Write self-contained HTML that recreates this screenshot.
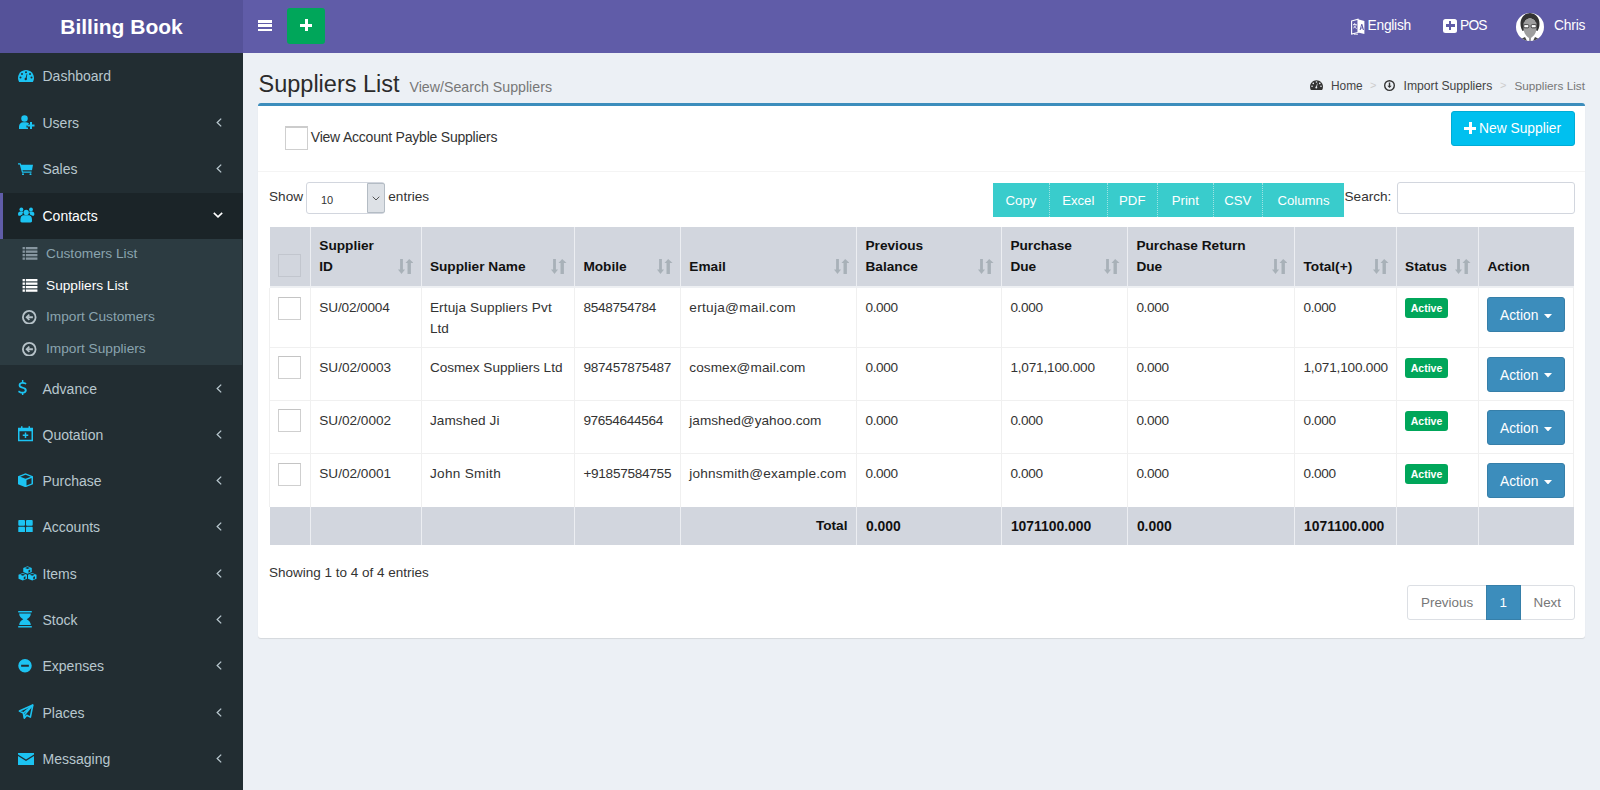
<!DOCTYPE html>
<html><head><meta charset="utf-8">
<style>
*{box-sizing:border-box;margin:0;padding:0}
html,body{width:1600px;height:790px;overflow:hidden}
body{font-family:"Liberation Sans",sans-serif;background:#ecf0f5;color:#333;font-size:13.6px;position:relative}
.abs{position:absolute}
#logo{left:0;top:0;width:243px;height:53px;background:#555299;color:#fff;font-weight:bold;font-size:21px;text-align:center;line-height:53px}
#nav{left:243px;top:0;width:1357px;height:53px;background:#605ca8}
#side{left:0;top:53px;width:243px;height:737px;background:#222d32}
.mt{font-size:14px;line-height:20px;white-space:nowrap}
.st{font-size:13.7px;line-height:20px;white-space:nowrap}
.nt{color:#fff;font-size:13.4px;line-height:20px;white-space:nowrap}
.box{left:258px;top:103px;width:1327px;height:535px;background:#fff;border-top:3px solid #3c8dbc;border-radius:3px;box-shadow:0 1px 1px rgba(0,0,0,.1)}
.t{white-space:nowrap;line-height:20px}
.th{font-weight:bold;color:#111;font-size:13.67px;line-height:20px;white-space:nowrap}
.td{font-size:13.6px;line-height:20px;white-space:nowrap;color:#333}
.cb{width:23px;height:23px;border:1px solid #cfcfcf;border-top-color:#c4c4c4;border-radius:0;background:#fff}
.lbl{width:43px;height:20px;background:#00a65a;color:#fff;font-weight:bold;font-size:10.5px;line-height:20px;text-align:center;border-radius:3px}
.act{width:78px;height:35px;background:#3c8dbc;color:#fff;font-size:13.8px;line-height:35px;border-radius:3px;border:1px solid #367fa9;padding-left:12px}
.dt{top:183px;height:34px;background:#39cccc;color:#fff;font-size:13.2px;line-height:35px;text-align:center;border-right:1px dotted #9fe3e3}
</style></head>
<body>
<div id="logo" class="abs">Billing Book</div>
<div id="nav" class="abs"></div>
<!-- hamburger -->
<div class="abs" style="left:258px;top:20px;width:14px;height:2.5px;background:#fff"></div>
<div class="abs" style="left:258px;top:24.3px;width:14px;height:2.5px;background:#fff"></div>
<div class="abs" style="left:258px;top:28.6px;width:14px;height:2.5px;background:#fff"></div>
<!-- green plus -->
<div class="abs" style="left:287px;top:8px;width:38px;height:36px;background:#00a65a;border-radius:3px"></div>
<div class="abs" style="left:300px;top:23.5px;width:12px;height:3px;background:#fff"></div>
<div class="abs" style="left:304.5px;top:19px;width:3px;height:12px;background:#fff"></div>
<!-- right nav -->
<svg class="abs" style="left:1351px;top:17.5px;width:14px;height:17px" viewBox="0 0 14 17"><path d="M0.6 3L7 1.2V14.5L0.6 16z" fill="none" stroke="#fff" stroke-width="1.1"/><path d="M7 1.2L13.4 3V16L7 14.5z" fill="#fff"/><path d="M2 6.5h3.5M3.7 5v1.5M2.3 10c1.5-.5 2.8-2 3-3.5M3 7.5c.5 1.5 1.5 2.5 2.8 3" fill="none" stroke="#fff" stroke-width=".8"/><path d="M8.6 12l1.7-6h1l1.7 6h-1.1l-.4-1.5h-1.4L9.7 12zm1.4-2.4h1l-.5-1.9z" fill="#605ca8"/><path d="M3 16.5c1 .5 3 .5 4-.5" fill="none" stroke="#fff" stroke-width=".8"/></svg>
<div class="abs nt" style="left:1367.5px;top:16px;font-size:13.8px;letter-spacing:-0.25px">English</div>
<div class="abs" style="left:1443px;top:18.5px;width:14px;height:14px;background:#fff;border-radius:2.5px"></div>
<div class="abs" style="left:1445.5px;top:24.3px;width:9px;height:2.4px;background:#605ca8"></div>
<div class="abs" style="left:1448.8px;top:21px;width:2.4px;height:9px;background:#605ca8"></div>
<div class="abs nt" style="left:1460px;top:16px;font-size:13.8px;letter-spacing:-0.8px">POS</div>
<svg class="abs" style="left:1516px;top:13px;width:28px;height:28px" viewBox="0 0 28 28"><defs><clipPath id="cc"><circle cx="14" cy="14" r="14"/></clipPath></defs><circle cx="14" cy="14" r="14" fill="#fff"/><g clip-path="url(#cc)"><path d="M4.5 11C4.5 4 9 0 14 0s9.5 4 9.5 11c0 3-1 5-2 7l-2.5-1V8c-2-2-4-2.5-5-2.5S11 6 9 8v9l-2.5 1C5.5 16 4.5 14 4.5 11z" fill="#333"/><path d="M9 8c1.5-2 3.5-2.5 5-2.5s3.5.5 5 2.5l1.5 2v5c0 4-2 8-6.5 10.5C9.5 23 7.5 19 7.5 15v-5z" fill="#9e9e9e"/><path d="M13 24h2v4h-2z" fill="#9e9e9e"/><path d="M5 26l4-2 2 4H5zM23 26l-4-2-2 4h6z" fill="#444"/><rect x="7.8" y="11.6" width="5" height="3.2" rx="1" fill="#fff" stroke="#222" stroke-width=".8"/><rect x="15.2" y="11.6" width="5" height="3.2" rx="1" fill="#fff" stroke="#222" stroke-width=".8"/></g></svg>
<div class="abs nt" style="left:1554px;top:16px;font-size:13.8px;letter-spacing:-0.2px">Chris</div>

<div id="side" class="abs"></div>
<div class="abs" style="left:0;top:193px;width:243px;height:46px;background:#1b2428;border-left:3px solid #605ca8"></div>
<div class="abs" style="left:0;top:239px;width:242px;height:126px;background:#2c3b41"></div>
<svg class="abs" style="left:18px;top:70px;width:16px;height:12px" viewBox="0 0 32 24" fill="#1cc3f2"><path d="M16 0C7.2 0 0 7.2 0 16c0 2.9.8 5.6 2.2 8h27.6c1.4-2.4 2.2-5.1 2.2-8C32 7.2 24.8 0 16 0z" /><g fill="#222d32"><circle cx="16" cy="4.5" r="2"/><circle cx="8" cy="8" r="2"/><circle cx="24" cy="8" r="2"/><circle cx="5" cy="15" r="2"/><circle cx="27" cy="15" r="2"/><circle cx="15.5" cy="18" r="2.4"/><path d="M14.8 17.5l2.6-9.5 1.2.3-1.6 9.6z"/></g></svg>
<div class="abs mt" style="left:42.5px;top:66.0px;color:#b8c7ce">Dashboard</div>
<svg class="abs" style="left:18px;top:115px;width:18px;height:14px" viewBox="0 0 36 28" fill="#1cc3f2"><circle cx="13" cy="7" r="6.5"/><path d="M2 28v-5c0-5 4-8.5 8-8.5h6c3 0 5 1.5 6.5 3.5H20v3h-3v4h3v3z"/><path d="M24 14h4v5h5v4h-5v5h-4v-5h-5v-4h5z"/></svg>
<div class="abs mt" style="left:42.5px;top:112.5px;color:#b8c7ce">Users</div>
<svg class="abs" style="left:216px;top:117.5px;width:6px;height:9px" viewBox="0 0 6 9"><path d="M5.2 .6L1.2 4.5l4 3.9" fill="none" stroke="#b8c7ce" stroke-width="1.3"/></svg>
<svg class="abs" style="left:18px;top:162.5px;width:15px;height:12.5px" viewBox="0 0 30 24" fill="#1cc3f2"><path d="M0 0h5l1.5 3H30l-2 11H9l.8 2.5H27V19H8L3.5 2.5H0z"/><circle cx="10" cy="22" r="2"/><circle cx="25" cy="22" r="2"/></svg>
<div class="abs mt" style="left:42.5px;top:159.0px;color:#b8c7ce">Sales</div>
<svg class="abs" style="left:216px;top:164.0px;width:6px;height:9px" viewBox="0 0 6 9"><path d="M5.2 .6L1.2 4.5l4 3.9" fill="none" stroke="#b8c7ce" stroke-width="1.3"/></svg>
<svg class="abs" style="left:18.4px;top:207px;width:16.4px;height:15.6px" viewBox="0 0 34 32" fill="#1cc3f2"><circle cx="7" cy="5" r="4"/><circle cx="27" cy="5" r="4"/><path d="M0 15c0-4 2-6 5-6h4c1 0 1.5.5 2 1-1 1.5-2 3.5-2 6-1 0-3 1-4 2H1z"/><path d="M34 15c0-4-2-6-5-6h-4c-1 0-1.5.5-2 1 1 1.5 2 3.5 2 6 1 0 3 1 4 2h4z"/><circle cx="17" cy="11" r="5.5"/><path d="M5 26c0-6 3-9 7-9h10c4 0 7 3 7 9v3c0 2-1 3-3 3H8c-2 0-3-1-3-3z"/></svg>
<div class="abs mt" style="left:42.5px;top:205.5px;color:#fff">Contacts</div>
<svg class="abs" style="left:213px;top:212.0px;width:10px;height:6px" viewBox="0 0 10 6"><path d="M.8 .8l4.2 4 4.2-4" fill="none" stroke="#fff" stroke-width="1.6"/></svg>
<svg class="abs" style="left:18.2px;top:379.5px;width:8.8px;height:15.5px" viewBox="0 0 18 32" fill="#1cc3f2"><path d="M8 0h3v4c2.5.3 5 1.3 6.5 2.5L16 9.5c-1.8-1.2-4-2-6.5-2-2.8 0-4.5 1.2-4.5 3 0 2 2 2.8 5.5 3.7 4.2 1.1 7.5 2.7 7.5 7 0 3.7-2.7 6.2-7 6.8V32H8v-4c-3-.3-6-1.6-8-3.3l1.8-3c2 1.6 4.5 2.6 7.3 2.6 3 0 4.8-1.2 4.8-3.2 0-2-1.8-2.8-5.3-3.8C4.5 16.2 1.3 14.6 1.3 10.6c0-3.4 2.6-6 6.7-6.6z"/></svg>
<div class="abs mt" style="left:42.5px;top:378.5px;color:#b8c7ce">Advance</div>
<svg class="abs" style="left:216px;top:383.5px;width:6px;height:9px" viewBox="0 0 6 9"><path d="M5.2 .6L1.2 4.5l4 3.9" fill="none" stroke="#b8c7ce" stroke-width="1.3"/></svg>
<svg class="abs" style="left:18px;top:426px;width:15px;height:15.6px" viewBox="0 0 30 30" fill="#1cc3f2"><path fill-rule="evenodd" d="M6 0h3v3h12V0h3v3h6v27H0V3h6zM3 10v17h24V10z"/><path d="M13.5 12.5h3v4h4v3h-4v4h-3v-4h-4v-3h4z"/></svg>
<div class="abs mt" style="left:42.5px;top:424.5px;color:#b8c7ce">Quotation</div>
<svg class="abs" style="left:216px;top:429.5px;width:6px;height:9px" viewBox="0 0 6 9"><path d="M5.2 .6L1.2 4.5l4 3.9" fill="none" stroke="#b8c7ce" stroke-width="1.3"/></svg>
<svg class="abs" style="left:18px;top:472.8px;width:15px;height:14.5px" viewBox="0 0 30 28" fill="#1cc3f2"><path d="M15 0L30 6V22L15 28L0 22V6z"/><g fill="#222d32"><path d="M15 3L25.5 7L15 11L4.5 7z"/><path d="M17 13.5L27 9.5V20.5L17 24.5z"/></g></svg>
<div class="abs mt" style="left:42.5px;top:470.5px;color:#b8c7ce">Purchase</div>
<svg class="abs" style="left:216px;top:475.5px;width:6px;height:9px" viewBox="0 0 6 9"><path d="M5.2 .6L1.2 4.5l4 3.9" fill="none" stroke="#b8c7ce" stroke-width="1.3"/></svg>
<svg class="abs" style="left:18px;top:519.5px;width:15px;height:12.5px" viewBox="0 0 30 26" fill="#1cc3f2"><rect x="0" y="0" width="14" height="12" rx="2"/><rect x="16" y="0" width="14" height="12" rx="2"/><rect x="0" y="14" width="14" height="12" rx="2"/><rect x="16" y="14" width="14" height="12" rx="2"/></svg>
<div class="abs mt" style="left:42.5px;top:517.0px;color:#b8c7ce">Accounts</div>
<svg class="abs" style="left:216px;top:522.0px;width:6px;height:9px" viewBox="0 0 6 9"><path d="M5.2 .6L1.2 4.5l4 3.9" fill="none" stroke="#b8c7ce" stroke-width="1.3"/></svg>
<svg class="abs" style="left:18px;top:565.5px;width:19px;height:15.2px" viewBox="0 0 38 30" fill="#1cc3f2"><path d="M10.5 4L19 0.5L27.5 4V12L19 15.5L10.5 12z"/><path d="M1.0 17.5L9.5 14.0L18.0 17.5V25.5L9.5 29.0L1.0 25.5z"/><path d="M20.0 17.5L28.5 14.0L37.0 17.5V25.5L28.5 29.0L20.0 25.5z"/><g fill="#222d32"><path d="M14 4L19 2L24 4L19 6z"/><path d="M21 8.5L24.5 6.7V11.5L21 13.3z"/><path d="M4.5 17.5L9.5 15.5L14.5 17.5L9.5 19.5z"/><path d="M11.5 22.0L15.0 20.2V25.0L11.5 26.8z"/><path d="M23.5 17.5L28.5 15.5L33.5 17.5L28.5 19.5z"/><path d="M30.5 22.0L34.0 20.2V25.0L30.5 26.8z"/></g></svg>
<div class="abs mt" style="left:42.5px;top:563.5px;color:#b8c7ce">Items</div>
<svg class="abs" style="left:216px;top:568.5px;width:6px;height:9px" viewBox="0 0 6 9"><path d="M5.2 .6L1.2 4.5l4 3.9" fill="none" stroke="#b8c7ce" stroke-width="1.3"/></svg>
<svg class="abs" style="left:18px;top:611px;width:14px;height:16.5px" viewBox="0 0 28 34" fill="#1cc3f2"><rect x="0" y="0" width="28" height="3"/><rect x="0" y="31" width="28" height="3"/><path d="M2 5h24c0 6-4 9-8.5 12C22 20 26 23 26 29H2c0-6 4-9 8.5-12C6 14 2 11 2 5z"/></svg>
<div class="abs mt" style="left:42.5px;top:609.5px;color:#b8c7ce">Stock</div>
<svg class="abs" style="left:216px;top:614.5px;width:6px;height:9px" viewBox="0 0 6 9"><path d="M5.2 .6L1.2 4.5l4 3.9" fill="none" stroke="#b8c7ce" stroke-width="1.3"/></svg>
<svg class="abs" style="left:18px;top:659px;width:14px;height:13.5px" viewBox="0 0 28 28" fill="#1cc3f2"><path fill-rule="evenodd" d="M14 0a14 14 0 1 1 0 28A14 14 0 0 1 14 0zM6 12v4h16v-4z"/></svg>
<div class="abs mt" style="left:42.5px;top:656.0px;color:#b8c7ce">Expenses</div>
<svg class="abs" style="left:216px;top:661.0px;width:6px;height:9px" viewBox="0 0 6 9"><path d="M5.2 .6L1.2 4.5l4 3.9" fill="none" stroke="#b8c7ce" stroke-width="1.3"/></svg>
<svg class="abs" style="left:18px;top:704.2px;width:16px;height:15.6px" viewBox="0 0 32 32" fill="#1cc3f2"><g fill="none" stroke="#1cc3f2" stroke-width="3.2" stroke-linejoin="round"><path d="M30 2L2.5 14.5 10.5 18.5 12.5 29 17.5 23 25 27z"/><path d="M30 2L10.5 18.5M30 2L13 22l0 6"/></g></svg>
<div class="abs mt" style="left:42.5px;top:702.5px;color:#b8c7ce">Places</div>
<svg class="abs" style="left:216px;top:707.5px;width:6px;height:9px" viewBox="0 0 6 9"><path d="M5.2 .6L1.2 4.5l4 3.9" fill="none" stroke="#b8c7ce" stroke-width="1.3"/></svg>
<svg class="abs" style="left:18px;top:752.7px;width:16px;height:12.1px" viewBox="0 0 32 24" fill="#1cc3f2"><path d="M0 0h32v3L16 13 0 3z"/><path d="M0 6l16 10 16-10v18H0z"/></svg>
<div class="abs mt" style="left:42.5px;top:749.0px;color:#b8c7ce">Messaging</div>
<svg class="abs" style="left:216px;top:754.0px;width:6px;height:9px" viewBox="0 0 6 9"><path d="M5.2 .6L1.2 4.5l4 3.9" fill="none" stroke="#b8c7ce" stroke-width="1.3"/></svg>
<svg class="abs" style="left:22px;top:247.0px;width:16px;height:13px" viewBox="0 0 32 28" fill="#8796a0"><rect x="0" y="0" width="5" height="5"/><rect x="7" y="0" width="25" height="5"/><rect x="0" y="7.5" width="5" height="5"/><rect x="7" y="7.5" width="25" height="5"/><rect x="0" y="15" width="5" height="5"/><rect x="7" y="15" width="25" height="5"/><rect x="0" y="22.5" width="5" height="5"/><rect x="7" y="22.5" width="25" height="5"/></svg>
<div class="abs st" style="left:46px;top:243.5px;color:#8aa4af">Customers List</div>
<svg class="abs" style="left:22px;top:279.0px;width:16px;height:13px" viewBox="0 0 32 28" fill="#fff"><rect x="0" y="0" width="5" height="5"/><rect x="7" y="0" width="25" height="5"/><rect x="0" y="7.5" width="5" height="5"/><rect x="7" y="7.5" width="25" height="5"/><rect x="0" y="15" width="5" height="5"/><rect x="7" y="15" width="25" height="5"/><rect x="0" y="22.5" width="5" height="5"/><rect x="7" y="22.5" width="25" height="5"/></svg>
<div class="abs st" style="left:46px;top:275.5px;color:#fff">Suppliers List</div>
<svg class="abs" style="left:22px;top:309.5px;width:14.5px;height:14.5px" viewBox="0 0 28 28" fill="#b6c2c8"><path fill-rule="evenodd" d="M14 0a14 14 0 1 1 0 28A14 14 0 0 1 14 0zm0 3.5a10.5 10.5 0 1 0 0 21 10.5 10.5 0 0 0 0-21z"/><path d="M13 7.5l2.5 2.5-3 2.3H21v3.4h-8.5l3 2.3-2.5 2.5L6.5 14z"/></svg>
<div class="abs st" style="left:46px;top:307.0px;color:#8aa4af">Import Customers</div>
<svg class="abs" style="left:22px;top:341.5px;width:14.5px;height:14.5px" viewBox="0 0 28 28" fill="#b6c2c8"><path fill-rule="evenodd" d="M14 0a14 14 0 1 1 0 28A14 14 0 0 1 14 0zm0 3.5a10.5 10.5 0 1 0 0 21 10.5 10.5 0 0 0 0-21z"/><path d="M13 7.5l2.5 2.5-3 2.3H21v3.4h-8.5l3 2.3-2.5 2.5L6.5 14z"/></svg>
<div class="abs st" style="left:46px;top:339.0px;color:#8aa4af">Import Suppliers</div>

<!-- content header -->
<div class="abs t" style="left:258.5px;top:70px;font-size:23.5px;line-height:28px;color:#2b2b2b">Suppliers List</div>
<div class="abs t" style="left:409.5px;top:77px;font-size:14.2px;color:#777">View/Search Suppliers</div>
<!-- breadcrumb -->
<svg class="abs" style="left:1310px;top:80px;width:13px;height:10px" viewBox="0 0 32 24" fill="#333"><path d="M16 0C7.2 0 0 7.2 0 16c0 2.9.8 5.6 2.2 8h27.6c1.4-2.4 2.2-5.1 2.2-8C32 7.2 24.8 0 16 0z"/><g fill="#ecf0f5"><circle cx="16" cy="4.5" r="2"/><circle cx="8" cy="8" r="2"/><circle cx="24" cy="8" r="2"/><circle cx="5" cy="15" r="2"/><circle cx="27" cy="15" r="2"/><circle cx="15.5" cy="18" r="2.4"/><path d="M14.8 17.5l2.6-9.5 1.2.3-1.6 9.6z"/></g></svg>
<div class="abs t" style="left:1331px;top:75.5px;font-size:11.9px;color:#444">Home</div>
<div class="abs t" style="left:1370px;top:75px;font-size:11px;color:#ccc">&gt;</div>
<svg class="abs" style="left:1384px;top:79.5px;width:11px;height:11px" viewBox="0 0 28 28"><path fill-rule="evenodd" fill="#333" d="M14 0a14 14 0 1 1 0 28A14 14 0 0 1 14 0zm0 3.5a10.5 10.5 0 1 0 0 21 10.5 10.5 0 0 0 0-21z"/><path fill="#333" d="M12.2 6.5h3.6v8h3.7L14 20.5 8.5 14.5h3.7z"/></svg>
<div class="abs t" style="left:1403.5px;top:75.5px;font-size:12.2px;color:#444">Import Suppliers</div>
<div class="abs t" style="left:1500px;top:75px;font-size:11px;color:#ccc">&gt;</div>
<div class="abs t" style="left:1514.4px;top:75.5px;font-size:11.75px;color:#777">Suppliers List</div>

<div class="box abs"></div>
<!-- box header -->
<div class="abs cb" style="left:285px;top:126px;width:23px;height:24px;border-top:2px solid #ccc"></div>
<div class="abs t" style="left:310.8px;top:127.3px;font-size:14px;letter-spacing:-0.22px;color:#333">View Account Payble Suppliers</div>
<div class="abs" style="left:1451px;top:111px;width:124px;height:35px;background:#00c0ef;border-radius:3px;border:1px solid #00acd6"></div>
<div class="abs" style="left:1464px;top:126.5px;width:12px;height:3px;background:#fff"></div>
<div class="abs" style="left:1468.5px;top:122px;width:3px;height:12px;background:#fff"></div>
<div class="abs t" style="left:1479px;top:119.2px;font-size:13.8px;color:#fff">New Supplier</div>
<div class="abs" style="left:258px;top:171px;width:1327px;height:1px;background:#f4f4f4"></div>

<!-- controls -->
<div class="abs t" style="left:269px;top:187px;font-size:13.6px;color:#333">Show</div>
<div class="abs" style="left:306px;top:182px;width:78.5px;height:32px;border:1px solid #d2d6de;border-radius:3px;background:#fff"></div>
<div class="abs" style="left:367px;top:183px;width:17.5px;height:30px;background:#dde1e6;border:1px solid #b4bcc4;border-radius:0 2px 2px 0"></div>
<svg class="abs" style="left:371.5px;top:196px;width:8px;height:5px" viewBox="0 0 8 5"><path d="M.7 .7L4 4 7.3.7" fill="none" stroke="#555" stroke-width="1"/></svg>
<div class="abs t" style="left:321px;top:190px;font-size:11px;color:#333">10</div>
<div class="abs t" style="left:388.3px;top:187px;font-size:13.6px;color:#333">entries</div>

<div class="abs dt" style="left:993px;width:57px">Copy</div>
<div class="abs dt" style="left:1050px;width:57.5px">Excel</div>
<div class="abs dt" style="left:1107.5px;width:50.5px">PDF</div>
<div class="abs dt" style="left:1158px;width:55.5px">Print</div>
<div class="abs dt" style="left:1213.5px;width:49.5px">CSV</div>
<div class="abs dt" style="left:1263px;width:81px;border-right:0">Columns</div>
<div class="abs t" style="left:1344.5px;top:187px;font-size:13.6px;color:#333">Search:</div>
<div class="abs" style="left:1397px;top:182px;width:178px;height:32px;border:1px solid #d2d6de;border-radius:3px;background:#fff"></div>

<div class="abs" style="left:269.6px;top:227px;width:1304.3px;height:58.5px;background:#d2d6de"></div>
<div class="abs" style="left:269.6px;top:285.5px;width:1304.3px;height:2px;background:#eef0f3"></div>
<div class="abs" style="left:269.6px;top:507.2px;width:1304.3px;height:38.3px;background:#d2d6de"></div>
<div class="abs" style="left:269.6px;top:346.9px;width:1304.3px;height:1px;background:#f0f0f0"></div>
<div class="abs" style="left:269.6px;top:400.0px;width:1304.3px;height:1px;background:#f0f0f0"></div>
<div class="abs" style="left:269.6px;top:453.2px;width:1304.3px;height:1px;background:#f0f0f0"></div>
<div class="abs" style="left:310px;top:227px;width:1px;height:58.5px;background:#eceef2"></div>
<div class="abs" style="left:310px;top:287.5px;width:1px;height:219.7px;background:#f0f0f0"></div>
<div class="abs" style="left:310px;top:507.2px;width:1px;height:38.3px;background:#eceef2"></div>
<div class="abs" style="left:421px;top:227px;width:1px;height:58.5px;background:#eceef2"></div>
<div class="abs" style="left:421px;top:287.5px;width:1px;height:219.7px;background:#f0f0f0"></div>
<div class="abs" style="left:421px;top:507.2px;width:1px;height:38.3px;background:#eceef2"></div>
<div class="abs" style="left:574px;top:227px;width:1px;height:58.5px;background:#eceef2"></div>
<div class="abs" style="left:574px;top:287.5px;width:1px;height:219.7px;background:#f0f0f0"></div>
<div class="abs" style="left:574px;top:507.2px;width:1px;height:38.3px;background:#eceef2"></div>
<div class="abs" style="left:680px;top:227px;width:1px;height:58.5px;background:#eceef2"></div>
<div class="abs" style="left:680px;top:287.5px;width:1px;height:219.7px;background:#f0f0f0"></div>
<div class="abs" style="left:680px;top:507.2px;width:1px;height:38.3px;background:#eceef2"></div>
<div class="abs" style="left:856px;top:227px;width:1px;height:58.5px;background:#eceef2"></div>
<div class="abs" style="left:856px;top:287.5px;width:1px;height:219.7px;background:#f0f0f0"></div>
<div class="abs" style="left:856px;top:507.2px;width:1px;height:38.3px;background:#eceef2"></div>
<div class="abs" style="left:1001px;top:227px;width:1px;height:58.5px;background:#eceef2"></div>
<div class="abs" style="left:1001px;top:287.5px;width:1px;height:219.7px;background:#f0f0f0"></div>
<div class="abs" style="left:1001px;top:507.2px;width:1px;height:38.3px;background:#eceef2"></div>
<div class="abs" style="left:1127px;top:227px;width:1px;height:58.5px;background:#eceef2"></div>
<div class="abs" style="left:1127px;top:287.5px;width:1px;height:219.7px;background:#f0f0f0"></div>
<div class="abs" style="left:1127px;top:507.2px;width:1px;height:38.3px;background:#eceef2"></div>
<div class="abs" style="left:1294px;top:227px;width:1px;height:58.5px;background:#eceef2"></div>
<div class="abs" style="left:1294px;top:287.5px;width:1px;height:219.7px;background:#f0f0f0"></div>
<div class="abs" style="left:1294px;top:507.2px;width:1px;height:38.3px;background:#eceef2"></div>
<div class="abs" style="left:1396px;top:227px;width:1px;height:58.5px;background:#eceef2"></div>
<div class="abs" style="left:1396px;top:287.5px;width:1px;height:219.7px;background:#f0f0f0"></div>
<div class="abs" style="left:1396px;top:507.2px;width:1px;height:38.3px;background:#eceef2"></div>
<div class="abs" style="left:1478px;top:227px;width:1px;height:58.5px;background:#eceef2"></div>
<div class="abs" style="left:1478px;top:287.5px;width:1px;height:219.7px;background:#f0f0f0"></div>
<div class="abs" style="left:1478px;top:507.2px;width:1px;height:38.3px;background:#eceef2"></div>
<div class="abs" style="left:269.1px;top:287.5px;width:1px;height:219.7px;background:#f0f0f0"></div>
<div class="abs" style="left:1573.4px;top:287.5px;width:1px;height:219.7px;background:#f0f0f0"></div>
<div class="abs" style="left:278px;top:254px;width:23px;height:23px;border:1px solid #c2c6ce;background:#d2d6de"></div>
<div class="abs th" style="left:319.3px;top:235.6px">Supplier</div>
<div class="abs th" style="left:319.3px;top:256.8px">ID</div>
<svg class="abs" style="left:397.9px;top:259px;width:15.5px;height:15px" viewBox="0 0 15.5 15" fill="#a8b1b8"><rect x="2.1" y="0" width="2.8" height="11"/><path d="M0 10.5h7L3.5 15z"/><rect x="9.5" y="4" width="3.4" height="11"/><path d="M7.5 4h8L11.2 0z"/></svg>
<div class="abs th" style="left:429.9px;top:256.8px">Supplier Name</div>
<svg class="abs" style="left:551.4px;top:259px;width:15.5px;height:15px" viewBox="0 0 15.5 15" fill="#a8b1b8"><rect x="2.1" y="0" width="2.8" height="11"/><path d="M0 10.5h7L3.5 15z"/><rect x="9.5" y="4" width="3.4" height="11"/><path d="M7.5 4h8L11.2 0z"/></svg>
<div class="abs th" style="left:583.4px;top:256.8px">Mobile</div>
<svg class="abs" style="left:657.3px;top:259px;width:15.5px;height:15px" viewBox="0 0 15.5 15" fill="#a8b1b8"><rect x="2.1" y="0" width="2.8" height="11"/><path d="M0 10.5h7L3.5 15z"/><rect x="9.5" y="4" width="3.4" height="11"/><path d="M7.5 4h8L11.2 0z"/></svg>
<div class="abs th" style="left:689.3px;top:256.8px">Email</div>
<svg class="abs" style="left:833.5px;top:259px;width:15.5px;height:15px" viewBox="0 0 15.5 15" fill="#a8b1b8"><rect x="2.1" y="0" width="2.8" height="11"/><path d="M0 10.5h7L3.5 15z"/><rect x="9.5" y="4" width="3.4" height="11"/><path d="M7.5 4h8L11.2 0z"/></svg>
<div class="abs th" style="left:865.5px;top:235.6px">Previous</div>
<div class="abs th" style="left:865.5px;top:256.8px">Balance</div>
<svg class="abs" style="left:978.4px;top:259px;width:15.5px;height:15px" viewBox="0 0 15.5 15" fill="#a8b1b8"><rect x="2.1" y="0" width="2.8" height="11"/><path d="M0 10.5h7L3.5 15z"/><rect x="9.5" y="4" width="3.4" height="11"/><path d="M7.5 4h8L11.2 0z"/></svg>
<div class="abs th" style="left:1010.4px;top:235.6px">Purchase</div>
<div class="abs th" style="left:1010.4px;top:256.8px">Due</div>
<svg class="abs" style="left:1104.4px;top:259px;width:15.5px;height:15px" viewBox="0 0 15.5 15" fill="#a8b1b8"><rect x="2.1" y="0" width="2.8" height="11"/><path d="M0 10.5h7L3.5 15z"/><rect x="9.5" y="4" width="3.4" height="11"/><path d="M7.5 4h8L11.2 0z"/></svg>
<div class="abs th" style="left:1136.4px;top:235.6px">Purchase Return</div>
<div class="abs th" style="left:1136.4px;top:256.8px">Due</div>
<svg class="abs" style="left:1271.5px;top:259px;width:15.5px;height:15px" viewBox="0 0 15.5 15" fill="#a8b1b8"><rect x="2.1" y="0" width="2.8" height="11"/><path d="M0 10.5h7L3.5 15z"/><rect x="9.5" y="4" width="3.4" height="11"/><path d="M7.5 4h8L11.2 0z"/></svg>
<div class="abs th" style="left:1303.5px;top:256.8px">Total(+)</div>
<svg class="abs" style="left:1373.1px;top:259px;width:15.5px;height:15px" viewBox="0 0 15.5 15" fill="#a8b1b8"><rect x="2.1" y="0" width="2.8" height="11"/><path d="M0 10.5h7L3.5 15z"/><rect x="9.5" y="4" width="3.4" height="11"/><path d="M7.5 4h8L11.2 0z"/></svg>
<div class="abs th" style="left:1405.1px;top:256.8px">Status</div>
<svg class="abs" style="left:1455.4px;top:259px;width:15.5px;height:15px" viewBox="0 0 15.5 15" fill="#a8b1b8"><rect x="2.1" y="0" width="2.8" height="11"/><path d="M0 10.5h7L3.5 15z"/><rect x="9.5" y="4" width="3.4" height="11"/><path d="M7.5 4h8L11.2 0z"/></svg>
<div class="abs th" style="left:1487.4px;top:256.8px">Action</div>
<div class="abs cb" style="left:278px;top:297px"></div>
<div class="abs td" style="left:319.3px;top:297.9px;letter-spacing:-0.138px">SU/02/0004</div>
<div class="abs td" style="left:429.9px;top:297.9px;letter-spacing:0.126px">Ertuja Suppliers Pvt</div>
<div class="abs td" style="left:429.9px;top:318.6px;letter-spacing:0px">Ltd</div>
<div class="abs td" style="left:583.4px;top:297.9px;letter-spacing:-0.294px">8548754784</div>
<div class="abs td" style="left:689.3px;top:297.9px;letter-spacing:0.296px">ertuja@mail.com</div>
<div class="abs td" style="left:865.5px;top:297.9px;letter-spacing:-0.364px">0.000</div>
<div class="abs td" style="left:1010.4px;top:297.9px;letter-spacing:-0.364px">0.000</div>
<div class="abs td" style="left:1136.4px;top:297.9px;letter-spacing:-0.364px">0.000</div>
<div class="abs td" style="left:1303.5px;top:297.9px;letter-spacing:-0.364px">0.000</div>
<div class="abs lbl" style="left:1405px;top:298.1px">Active</div>
<div class="abs act" style="left:1487px;top:297.0px">Action<svg style="position:absolute;left:55.5px;top:15.5px;width:8px;height:4.5px" viewBox="0 0 9 5" fill="#fff"><path d="M0 0h9L4.5 5z"/></svg></div>
<div class="abs cb" style="left:278px;top:356.2px"></div>
<div class="abs td" style="left:319.3px;top:357.9px;letter-spacing:0px">SU/02/0003</div>
<div class="abs td" style="left:429.9px;top:357.9px;letter-spacing:-0.022px">Cosmex Suppliers Ltd</div>
<div class="abs td" style="left:583.4px;top:357.9px;letter-spacing:-0.251px">987457875487</div>
<div class="abs td" style="left:689.3px;top:357.9px;letter-spacing:0.079px">cosmex@mail.com</div>
<div class="abs td" style="left:865.5px;top:357.9px;letter-spacing:-0.364px">0.000</div>
<div class="abs td" style="left:1010.4px;top:357.9px;letter-spacing:-0.189px">1,071,100.000</div>
<div class="abs td" style="left:1136.4px;top:357.9px;letter-spacing:-0.364px">0.000</div>
<div class="abs td" style="left:1303.5px;top:357.9px;letter-spacing:-0.189px">1,071,100.000</div>
<div class="abs lbl" style="left:1405px;top:358.0px">Active</div>
<div class="abs act" style="left:1487px;top:356.9px">Action<svg style="position:absolute;left:55.5px;top:15.5px;width:8px;height:4.5px" viewBox="0 0 9 5" fill="#fff"><path d="M0 0h9L4.5 5z"/></svg></div>
<div class="abs cb" style="left:278px;top:409.4px"></div>
<div class="abs td" style="left:319.3px;top:410.9px;letter-spacing:0px">SU/02/0002</div>
<div class="abs td" style="left:429.9px;top:410.9px;letter-spacing:0.096px">Jamshed Ji</div>
<div class="abs td" style="left:583.4px;top:410.9px;letter-spacing:-0.33px">97654644564</div>
<div class="abs td" style="left:689.3px;top:410.9px;letter-spacing:0.028px">jamshed@yahoo.com</div>
<div class="abs td" style="left:865.5px;top:410.9px;letter-spacing:-0.364px">0.000</div>
<div class="abs td" style="left:1010.4px;top:410.9px;letter-spacing:-0.364px">0.000</div>
<div class="abs td" style="left:1136.4px;top:410.9px;letter-spacing:-0.364px">0.000</div>
<div class="abs td" style="left:1303.5px;top:410.9px;letter-spacing:-0.364px">0.000</div>
<div class="abs lbl" style="left:1405px;top:411.1px">Active</div>
<div class="abs act" style="left:1487px;top:410.0px">Action<svg style="position:absolute;left:55.5px;top:15.5px;width:8px;height:4.5px" viewBox="0 0 9 5" fill="#fff"><path d="M0 0h9L4.5 5z"/></svg></div>
<div class="abs cb" style="left:278px;top:462.6px"></div>
<div class="abs td" style="left:319.3px;top:464.1px;letter-spacing:0px">SU/02/0001</div>
<div class="abs td" style="left:429.9px;top:464.1px;letter-spacing:0.318px">John Smith</div>
<div class="abs td" style="left:583.4px;top:464.1px;letter-spacing:-0.276px">+91857584755</div>
<div class="abs td" style="left:689.3px;top:464.1px;letter-spacing:0.205px">johnsmith@example.com</div>
<div class="abs td" style="left:865.5px;top:464.1px;letter-spacing:-0.364px">0.000</div>
<div class="abs td" style="left:1010.4px;top:464.1px;letter-spacing:-0.364px">0.000</div>
<div class="abs td" style="left:1136.4px;top:464.1px;letter-spacing:-0.364px">0.000</div>
<div class="abs td" style="left:1303.5px;top:464.1px;letter-spacing:-0.364px">0.000</div>
<div class="abs lbl" style="left:1405px;top:464.3px">Active</div>
<div class="abs act" style="left:1487px;top:463.2px">Action<svg style="position:absolute;left:55.5px;top:15.5px;width:8px;height:4.5px" viewBox="0 0 9 5" fill="#fff"><path d="M0 0h9L4.5 5z"/></svg></div>
<div class="abs th" style="left:807.5px;width:40px;text-align:right;top:516px">Total</div>
<div class="abs th" style="left:866.0px;top:516px;font-size:13.9px">0.000</div>
<div class="abs th" style="left:1010.9px;top:516px;font-size:13.9px">1071100.000</div>
<div class="abs th" style="left:1136.9px;top:516px;font-size:13.9px">0.000</div>
<div class="abs th" style="left:1304.0px;top:516px;font-size:13.9px">1071100.000</div>

<div class="abs t" style="left:269px;top:563px;font-size:13.5px;color:#333">Showing 1 to 4 of 4 entries</div>
<div class="abs" style="left:1407px;top:585px;width:167.5px;height:35px;border:1px solid #dcdfe4;border-radius:3px;background:#fff"></div>
<div class="abs" style="left:1486px;top:585px;width:35px;height:35px;background:#3c8dbc;border:1px solid #367fa9"></div>
<div class="abs t" style="left:1421px;top:592.5px;font-size:13.4px;color:#777">Previous</div>
<div class="abs t" style="left:1499.5px;top:592.5px;font-size:13.4px;color:#fff">1</div>
<div class="abs t" style="left:1533.5px;top:592.5px;font-size:13.4px;color:#777">Next</div>
</body></html>
